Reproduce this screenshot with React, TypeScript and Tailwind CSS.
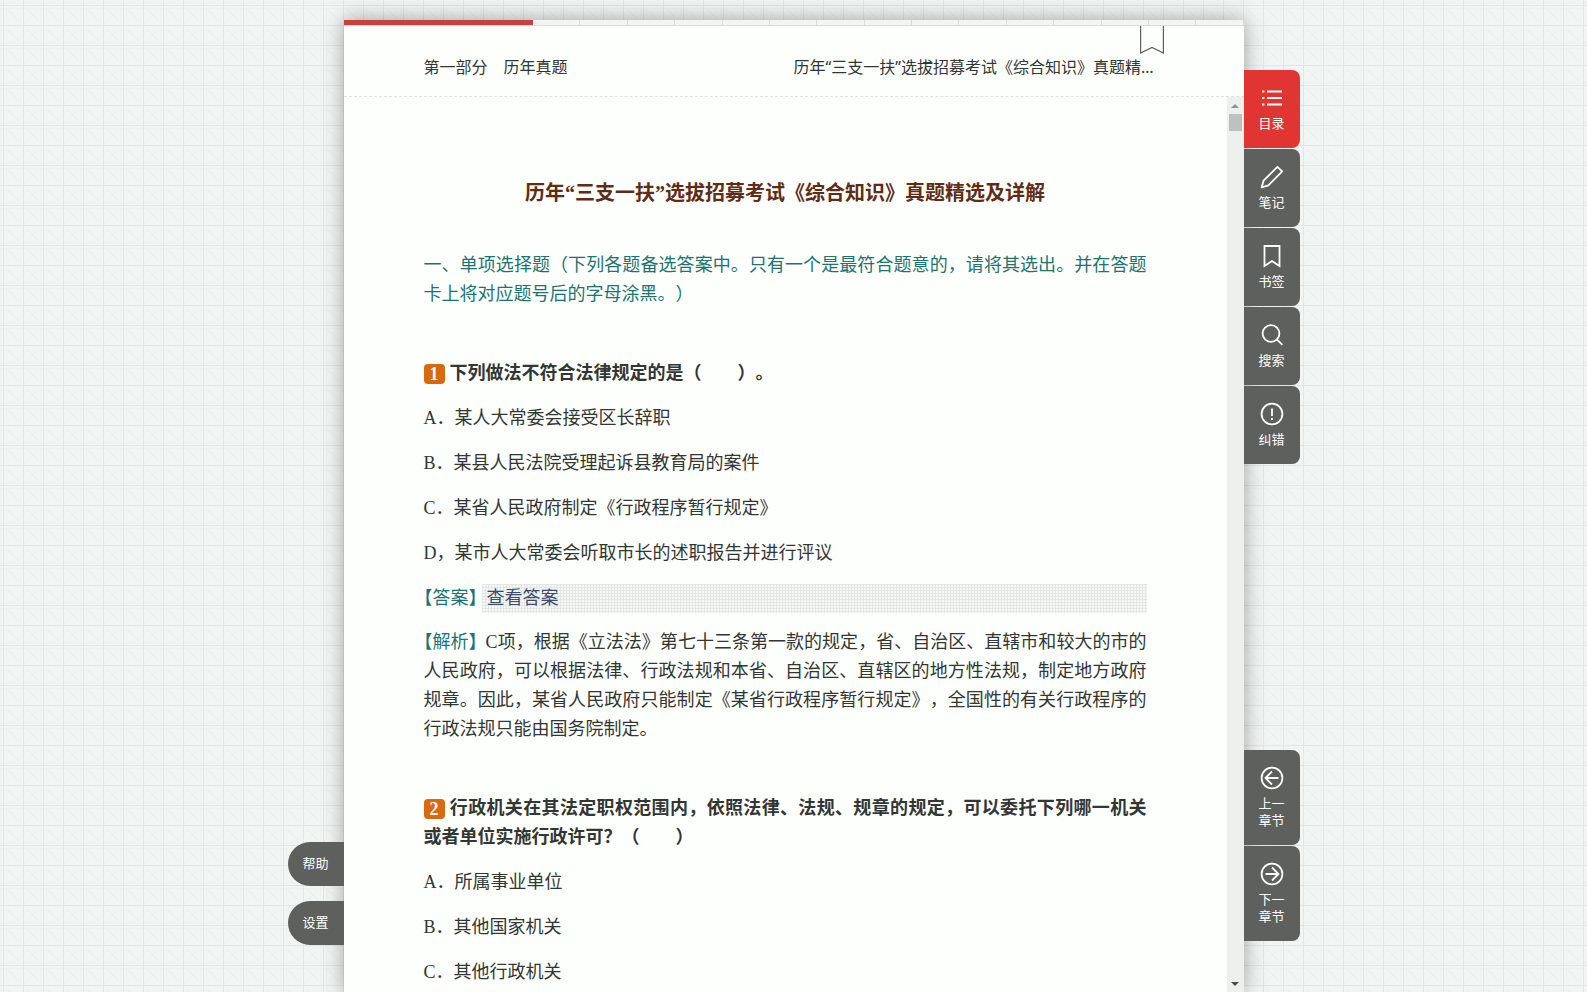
import React from "react";

type IconProps = { children: React.ReactNode };

function Icon({ children }: IconProps) {
  return (
    <svg width="24" height="24" viewBox="0 0 24 24" fill="none" stroke="currentColor" strokeWidth="1.8" aria-hidden="true">
      {children}
    </svg>
  );
}

const tools = [
  {
    label: "目录",
    active: true,
    icon: (
      <Icon>
        <path d="M7 5.5H22M7 12H22M7 18.5H22M2 5.5h2.4M2 12h2.4M2 18.5h2.4" />
      </Icon>
    ),
  },
  {
    label: "笔记",
    icon: (
      <Icon>
        <path d="M1.6 22.4 3.6 15.6 17.4 1.8 22.2 6.4 8.4 20.4Z" strokeLinejoin="round" />
      </Icon>
    ),
  },
  {
    label: "书签",
    icon: (
      <Icon>
        <path d="M4.5 2H19.5V22L12 17L4.5 22Z" />
      </Icon>
    ),
  },
  {
    label: "搜索",
    icon: (
      <Icon>
        <circle cx="11" cy="10.5" r="8.4" />
        <path d="M16.8 16.3 22.4 21.9" />
      </Icon>
    ),
  },
  {
    label: "纠错",
    icon: (
      <Icon>
        <circle cx="12" cy="12" r="10.4" />
        <path d="M12 6.5V14M12 16V18" />
      </Icon>
    ),
  },
];

const chapters = [
  {
    label: ["上一", "章节"],
    icon: (
      <Icon>
        <circle cx="12" cy="12" r="10.4" />
        <path d="M18.5 12H6M12 5.5 5.5 12 12 18.5" />
      </Icon>
    ),
  },
  {
    label: ["下一", "章节"],
    icon: (
      <Icon>
        <circle cx="12" cy="12" r="10.4" />
        <path d="M5.5 12H18M12 5.5 18.5 12 12 18.5" />
      </Icon>
    ),
  },
];

const title = "历年“三支一扶”选拔招募考试《综合知识》真题精选及详解";

const firstOptions = [
  "A．某人大常委会接受区长辞职",
  "B．某县人民法院受理起诉县教育局的案件",
  "C．某省人民政府制定《行政程序暂行规定》",
  "D，某市人大常委会听取市长的述职报告并进行评议",
];

const secondOptions = ["A．所属事业单位", "B．其他国家机关", "C．其他行政机关"];

function GridBackground() {
  return (
    <svg className="absolute inset-0 h-full w-full" aria-hidden="true">
      <defs>
        <pattern id="grid" x="3" y="5" width="40" height="40" patternUnits="userSpaceOnUse">
          <rect width="40" height="40" fill="#f1f5f3" />
          <path d="M4 4 16 16M24 4 36 16M4 24 16 36M24 24 36 36" stroke="#eaeeec" />
          <path d="M22 18 38 2M22 38 38 22" stroke="#edf1ef" />
          <path d="M0 3.5H40M3.5 0V40M0 37.5H40M37.5 0V40" stroke="#eef2f0" />
          <path d="M0 .5H40M0 20.5H40M.5 0V40M20.5 0V40" stroke="#e2e6e4" />
        </pattern>
      </defs>
      <rect width="100%" height="100%" fill="url(#grid)" />
    </svg>
  );
}

function Question({ number, children }: { number: number; children: React.ReactNode }) {
  return (
    <h2 className="mt-[50px] text-justify font-bold">
      <span className="mr-[5px] inline-block h-5 w-[21px] rounded bg-[#d9690f] text-center align-[-1px] leading-5 text-white">
        {number}
      </span>
      {children}
    </h2>
  );
}

function Options({ items }: { items: string[] }) {
  return (
    <ul className="mt-4 flex flex-col gap-4">
      {items.map((item) => (
        <li key={item}>{item}</li>
      ))}
    </ul>
  );
}

export default function App() {
  return (
    <div className="relative h-screen overflow-hidden font-['Noto_Sans','Noto_Sans_CJK_SC',sans-serif] text-[#333633]">
      <GridBackground />

      <div className="relative flex h-full justify-center pt-5">
        {/* 左侧按钮 */}
        <aside className="z-10 flex w-14 shrink-0 flex-col justify-end gap-[15px] pb-[47px]">
          {["帮助", "设置"].map((label) => (
            <button key={label} className="h-11 rounded-l-full bg-[#5d605d] text-[13px] text-white">
              {label}
            </button>
          ))}
        </aside>

        {/* 阅读区 */}
        <main className="relative flex min-w-0 max-w-[900px] flex-1 flex-col bg-[#fdfffd] shadow-[0_0_20px_rgba(0,0,0,0.35)]">
          <div className="relative flex h-[6px] shrink-0 border-b border-[#d9dcda] bg-[#f3f5f3]">
            {Array.from({ length: 19 }, (_, i) => (
              <span key={i} className="flex-1 border-r border-[#d9dcda] last:border-r-0" />
            ))}
            <span className="absolute top-0 left-0 h-[5px] w-[21%] bg-[#cb3f3c]" />
          </div>

          <button aria-label="添加书签" className="absolute top-[6px] right-20 text-[#5c605d]">
            <svg width="24" height="28" viewBox="0 0 24 28" fill="none" stroke="currentColor" strokeWidth="1.2">
              <path d="M.6 0V27L12 21.5L23.4 27V0" />
            </svg>
          </button>

          <header className="flex h-[71px] shrink-0 items-center justify-between gap-8 border-b border-dashed border-[#dfe2e0] px-20 pt-3">
            <span className="whitespace-nowrap">第一部分　历年真题</span>
            <span className="w-[370px] truncate">{title}</span>
          </header>

          <div className="flex min-h-0 flex-1">
            <article className="min-w-0 flex-1 overflow-hidden px-20 pt-20 font-['Liberation_Serif','Noto_Sans_CJK_SC',serif] text-lg leading-[29px] [text-spacing-trim:space-all]">
              <h1 className="text-center text-xl leading-8 font-bold text-[#5f2c14]">{title}</h1>

              <p className="mt-[42px] text-justify text-[#1d7370]">
                一、单项选择题（下列各题备选答案中。只有一个是最符合题意的，请将其选出。并在答题卡上将对应题号后的字母涂黑。）
              </p>

              <Question number={1}>下列做法不符合法律规定的是（　　）。</Question>
              <Options items={firstOptions} />

              <div className="mt-4 flex">
                <span className="mr-1 text-[#1d7370] [font-feature-settings:'halt']">【答案】</span>
                <button className="flex-1 bg-[#f6f8f6] bg-[linear-gradient(#e4e7e5_1px,transparent_1px),linear-gradient(90deg,#e4e7e5_1px,transparent_1px)] bg-[size:3px_3px] pl-[5px] text-left text-[#3f4a70]">
                  查看答案
                </button>
              </div>

              <p className="mt-[15px] text-justify">
                <span className="mr-2 text-[#1d7370] [font-feature-settings:'halt']">【解析】</span>
                C项，根据《立法法》第七十三条第一款的规定，省、自治区、直辖市和较大的市的人民政府，可以根据法律、行政法规和本省、自治区、直辖区的地方性法规，制定地方政府规章。因此，某省人民政府只能制定《某省行政程序暂行规定》，全国性的有关行政程序的行政法规只能由国务院制定。
              </p>

              <Question number={2}>
                行政机关在其法定职权范围内，依照法律、法规、规章的规定，可以委托下列哪一机关或者单位实施行政许可？（　　）
              </Question>
              <Options items={secondOptions} />
            </article>

            {/* 滚动条 */}
            <div className="flex w-[17px] shrink-0 flex-col items-center justify-between bg-[#eef0ee] pt-[7px] pb-[6px]" aria-hidden="true">
              <div className="flex flex-col items-center gap-[6px]">
                <svg width="8" height="4" viewBox="0 0 8 4">
                  <path d="M0 4 4 0 8 4Z" fill="#8f9290" />
                </svg>
                <span className="h-[17px] w-[13px] bg-[#bfc1bf]" />
              </div>
              <svg width="8" height="4" viewBox="0 0 8 4">
                <path d="M0 0 4 4 8 0Z" fill="#4a4c4a" />
              </svg>
            </div>
          </div>
        </main>

        {/* 右侧工具栏 */}
        <aside className="z-10 flex w-14 shrink-0 flex-col justify-between pt-[50px] pb-[51px] text-[13px] leading-[17px] text-white">
          <div className="flex flex-col gap-px">
            {tools.map((tool) => (
              <button
                key={tool.label}
                className={`flex h-[78px] flex-col items-center gap-[5px] rounded-r-lg pt-4 ${tool.active ? "bg-[#e13533]" : "bg-[#5d605d]"}`}
              >
                {tool.icon}
                {tool.label}
              </button>
            ))}
          </div>
          <div className="flex flex-col gap-px">
            {chapters.map((chapter) => (
              <button key={chapter.label[0]} className="flex h-[95px] flex-col items-center gap-[5px] rounded-r-lg bg-[#5d605d] pt-4">
                {chapter.icon}
                <span>
                  {chapter.label[0]}
                  <br />
                  {chapter.label[1]}
                </span>
              </button>
            ))}
          </div>
        </aside>
      </div>
    </div>
  );
}
